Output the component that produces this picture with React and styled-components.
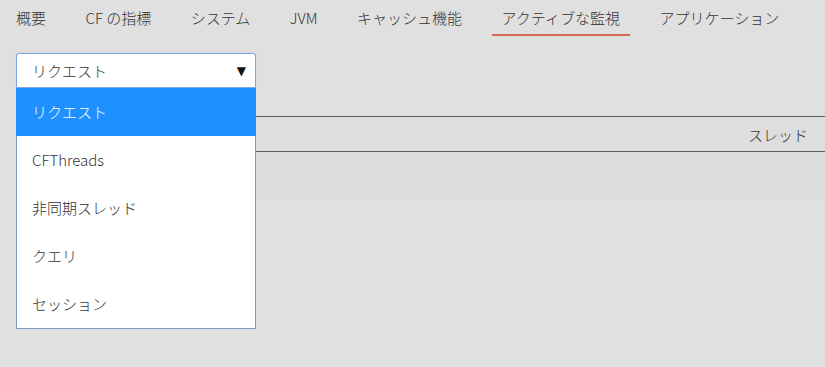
import React from "react";
import styled, { createGlobalStyle } from "styled-components";

const Global = createGlobalStyle`
  html, body { margin: 0; padding: 0; background: #e0e0e0; }
  body {
    font-family: "Noto Sans CJK JP", "Noto Sans", sans-serif;
    color: #333;
    font-size: 15px;
    font-weight: 300;
  }
`;

const Page = styled.div`
  width: 825px;
  height: 367px;
  overflow: hidden;
  background: #e0e0e0;
`;

const Nav = styled.nav`
  display: flex;
  align-items: flex-end;
  height: 36px;
  padding-left: 6px;
  gap: 19.5px;
`;

const Tab = styled.div`
  padding: 0 10px;
  height: 36px;
  line-height: 36px;
  box-sizing: border-box;
  font-size: 15px;
  color: #333;
  white-space: nowrap;
  border-bottom: 2px solid ${(p) => (p.$active ? "#d46a55" : "transparent")};
  margin-top: -2px;
`;

const Body = styled.div`
  padding: 17px 0 0 16px;
`;

const SelectWrap = styled.div`
  position: relative;
  width: 240px;
`;

const Select = styled.div`
  box-sizing: border-box;
  height: 35px;
  background: #fff;
  border: 1px solid #7fa6e6;
  border-radius: 3px 3px 0 0;
  box-shadow: 0 0 1px #a9c4f0;
  display: flex;
  align-items: center;
  justify-content: space-between;
  padding: 0 9px 0 15px;
  font-size: 15px;
  color: #333;
`;

const Caret = styled.span`
  font-size: 12px;
  font-weight: 400;
  color: #111;
  font-family: "DejaVu Sans", sans-serif;
`;

const List = styled.ul`
  position: absolute;
  z-index: 2;
  top: 35px;
  left: 0;
  width: 240px;
  box-sizing: border-box;
  margin: 0;
  padding: 0;
  list-style: none;
  background: #fff;
  border: 1px solid #8199c0;
  border-top: none;
`;

const Item = styled.li`
  height: 48px;
  line-height: 48px;
  padding-left: 15px;
  font-size: 15px;
  background: ${(p) => (p.$selected ? "#1e90ff" : "#fff")};
  color: ${(p) => (p.$selected ? "#fff" : "#333")};
  &:first-child { margin-left: -1px; width: 240px; box-sizing: border-box; padding-left: 16px; }
`;

const Table = styled.div`
  margin-top: 28px;
`;

const HeadRow = styled.div`
  display: flex;
  justify-content: flex-end;
  height: 36px;
  box-sizing: border-box;
  border-top: 1px solid #606060;
  border-bottom: 1px solid #606060;
  background: #dedede;
  padding-right: 17px;
  align-items: center;
`;

const HeadCell = styled.div`
  font-size: 15px;
  color: #333;
`;

const Row = styled.div`
  height: 47px;
  background: #dcdcdc;
`;

const tabs = [
  "概要",
  "CF の指標",
  "システム",
  "JVM",
  "キャッシュ機能",
  "アクティブな監視",
  "アプリケーション",
];

const options = ["リクエスト", "CFThreads", "非同期スレッド", "クエリ", "セッション"];

export default function App() {
  return (
    <Page>
      <Global />
      <Nav>
        {tabs.map((t) => (
          <Tab key={t} $active={t === "アクティブな監視"}>
            {t}
          </Tab>
        ))}
      </Nav>
      <Body>
        <SelectWrap>
          <Select>
            <span>リクエスト</span>
            <Caret>▼</Caret>
          </Select>
          <List>
            {options.map((o, i) => (
              <Item key={o} $selected={i === 0}>
                {o}
              </Item>
            ))}
          </List>
        </SelectWrap>
        <Table>
          <HeadRow>
            <HeadCell>スレッド</HeadCell>
          </HeadRow>
          <Row />
        </Table>
      </Body>
    </Page>
  );
}
